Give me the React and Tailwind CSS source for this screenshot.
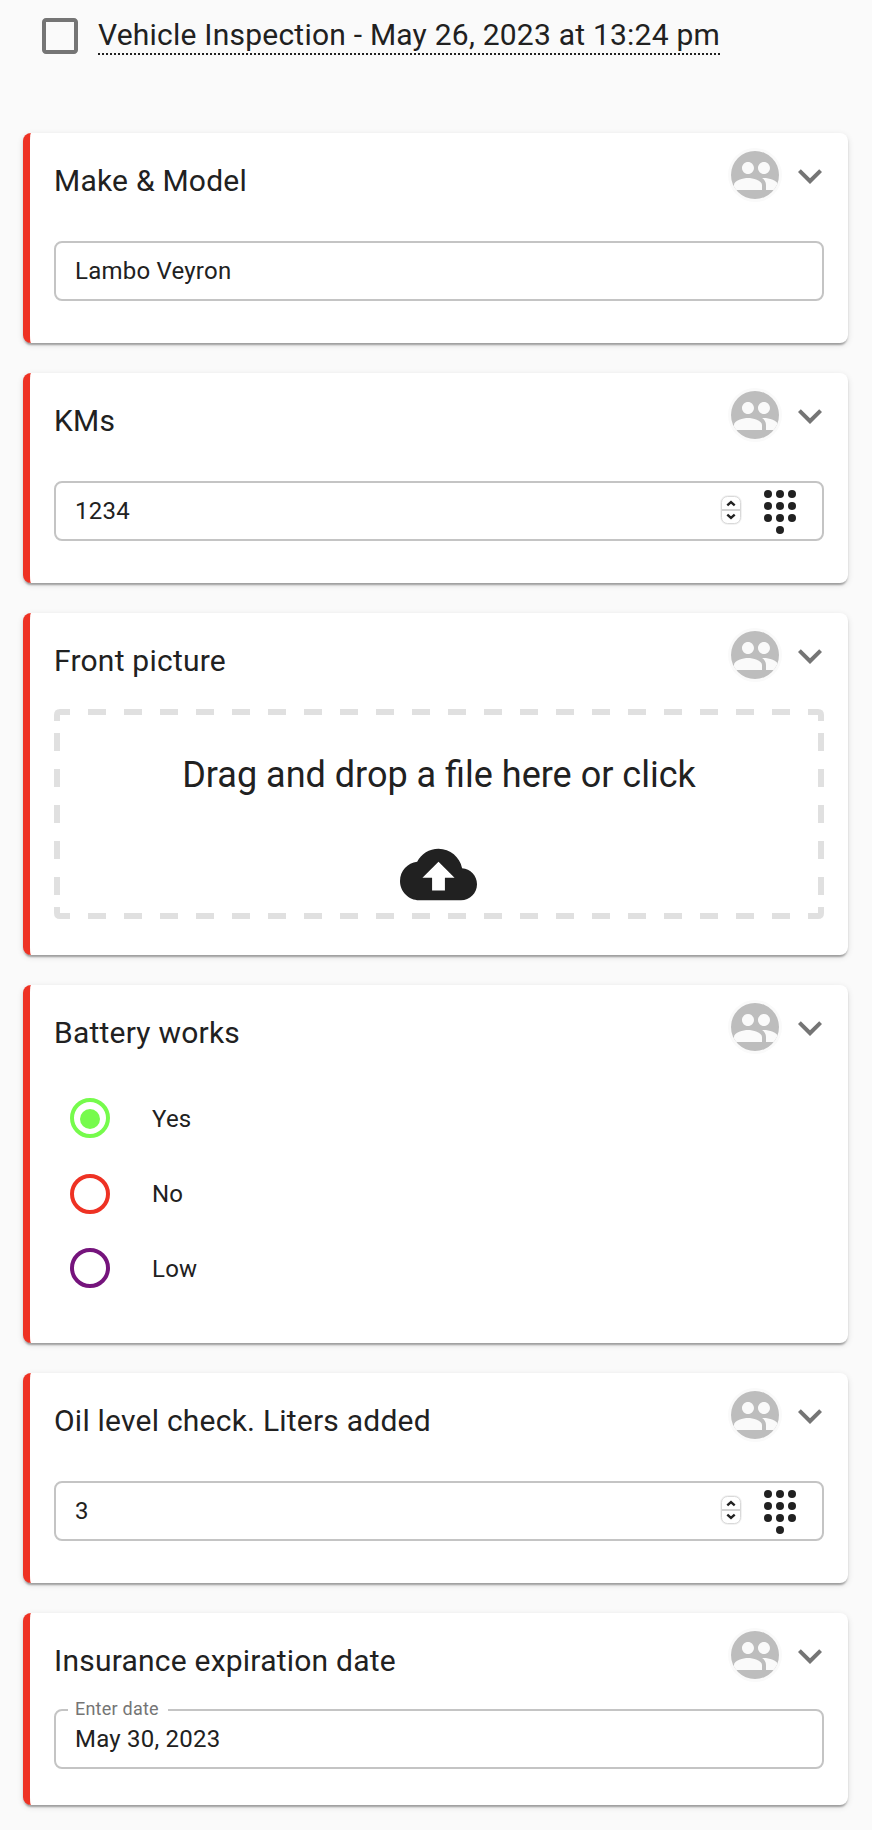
const RED = "#ee3224";

function Avatar() {
  return (
    <svg width="54" height="54" viewBox="0 0 54 54" className="block shrink-0">
      <defs>
        <clipPath id="disc">
          <circle cx="27" cy="27" r="24" />
        </clipPath>
      </defs>
      <circle cx="27" cy="27" r="27" fill="#fafafa" />
      <circle cx="27" cy="27" r="24" fill="#bdbdbd" />
      <g clipPath="url(#disc)">
        <path
          transform="translate(4 4) scale(2)"
          fill="#fafafa"
          d="M16 11c1.66 0 2.99-1.34 2.99-3S17.66 5 16 5c-1.66 0-3 1.34-3 3s1.34 3 3 3zm-8 0c1.66 0 2.99-1.34 2.99-3S9.66 5 8 5C6.34 5 5 6.34 5 8s1.34 3 3 3zm0 2c-2.33 0-7 1.17-7 3.5V19h14v-2.5c0-2.33-4.67-3.5-7-3.5zm8 0c-.29 0-.62.02-.97.05 1.16.84 1.97 1.97 1.97 3.45V19h6v-2.5c0-2.33-4.67-3.5-7-3.5z"
        />
      </g>
    </svg>
  );
}

function Chevron() {
  return (
    <svg width="48" height="48" viewBox="0 0 24 24" fill="#757575" className="block shrink-0">
      <path d="M16.59 8.59L12 13.17 7.41 8.59 6 10l6 6 6-6z" />
    </svg>
  );
}

function Dialpad() {
  const dots = [[6, 3], [12, 3], [18, 3], [6, 9], [12, 9], [18, 9], [6, 15], [12, 15], [18, 15], [12, 21]];
  return (
    <svg width="48" height="48" viewBox="0 0 24 24" fill="#212121" className="mt-[2px] block shrink-0">
      {dots.map(([x, y]) => (
        <circle key={x + "-" + y} cx={x} cy={y} r="2" />
      ))}
    </svg>
  );
}

function Spinner() {
  return (
    <svg width="24" height="32" viewBox="0 0 24 32" fill="none" className="-mt-[2px] block shrink-0">
      <rect x="2" y="2" width="20" height="28" rx="7" stroke="#000" strokeOpacity="0.05" strokeWidth="2" />
      <rect x="2.5" y="2.5" width="19" height="27" rx="6" fill="#fff" stroke="#d9d9d9" />
      <path d="M3 16H21" stroke="#d4d4d4" strokeWidth="2" />
      <path d="M8.3 11.3L12 8L15.7 11.3M8.3 20.7L12 24L15.7 20.7" stroke="#222" strokeWidth="2.4" />
    </svg>
  );
}

function Card({ title, className, children }) {
  return (
    <section
      className={
        "rounded-[8px] border-l-[7px] border-[#ee3224] bg-white pl-6 pr-6 shadow-[0_4px_2px_-2px_rgba(0,0,0,0.2),0_2px_2px_0_rgba(0,0,0,0.14),0_2px_6px_0_rgba(0,0,0,0.12)] " +
        className
      }
    >
      <header className="-mr-[10px] flex h-[96px] items-start">
        <h2 className="mt-[24px] flex-1 text-[30px] leading-[48px] tracking-[0.0075em]">{title}</h2>
        <div className="flex items-start pt-[15px]">
          <Avatar />
          <div className="ml-1 pt-1">
            <Chevron />
          </div>
        </div>
      </header>
      {children}
    </section>
  );
}

function Field({ value, numeric, label, className = "" }) {
  return (
    <div
      className={
        "relative flex h-[60px] items-center rounded-[8px] border-2 border-[#c4c4c4] pl-[19px] pr-[18px] text-[24px] tracking-[0.00938em] " +
        className
      }
    >
      {label && (
        <span className="absolute -top-[14px] left-[12px] bg-white pl-[7px] pr-[9px] text-[18px] leading-[24px] text-[#757575]">
          {label}
        </span>
      )}
      <span className="flex-1 leading-[28px]">{value}</span>
      {numeric && (
        <div className="flex items-center gap-[13px]">
          <Spinner />
          <Dialpad />
        </div>
      )}
    </div>
  );
}

function Option({ label, color, selected, ringOffset = "mt-[17px]" }) {
  return (
    <label className="flex h-[75px] items-center pl-4">
      <svg width="40" height="40" viewBox="0 0 40 40" fill="none" className={"block self-start " + ringOffset}>
        <circle cx="20" cy="20" r="18" stroke={color} strokeWidth="4" />
        {selected && <circle cx="20" cy="21" r="10" fill={color} />}
      </svg>
      <span className="ml-[42px] text-[24px] leading-[36px] tracking-[0.00938em]">{label}</span>
    </label>
  );
}

function DashedFrame() {
  return (
    <svg width="770" height="210" viewBox="0 0 770 210" fill="none" stroke="#e0e0e0" strokeWidth="6" className="absolute inset-0">
      <path d="M34 3H736M34 207H736M3 24V186M767 24V186" strokeDasharray="18 18" />
      <path d="M3 12V6Q3 3 6 3H16M754 3H764Q767 3 767 6V12M3 198V204Q3 207 6 207H16M754 207H764Q767 207 767 204V198" />
    </svg>
  );
}

export default function App() {
  return (
    <main className="min-h-[1830px] w-[872px] bg-[#fafafa] pl-[23px] pr-6 font-['Roboto',sans-serif] text-[#212121]">
      <header className="flex h-[133px] items-start pl-[13px]">
        <svg width="48" height="48" viewBox="0 0 24 24" fill="#757575" className="mt-3 block">
          <path d="M19 5v14H5V5h14m0-2H5c-1.1 0-2 .9-2 2v14c0 1.1.9 2 2 2h14c1.1 0 2-.9 2-2V5c0-1.1-.9-2-2-2z" />
        </svg>
        <h1 className="ml-[14px] mt-[17px] h-[38px] border-b-2 border-dotted border-[#212121] text-[30px] leading-[36px] tracking-[0.0075em]">
          Vehicle Inspection - May 26, 2023 at 13:24 pm
        </h1>
      </header>
      <div className="flex flex-col gap-[30px]">
        <Card title="Make & Model" className="h-[210px]">
          <Field value="Lambo Veyron" className="mt-3" />
        </Card>
        <Card title="KMs" className="h-[210px]">
          <Field value="1234" numeric className="mt-3" />
        </Card>
        <Card title="Front picture" className="h-[342px]">
          <div className="relative flex h-[210px] flex-col items-center pt-[42px]">
            <DashedFrame />
            <p className="text-[36px] leading-[48px]">Drag and drop a file here or click</p>
            <svg width="77" height="77" viewBox="0 0 24 24" fill="#212121" className="mr-[2px] mt-[37px] block">
              <path d="M19.35 10.04C18.67 6.59 15.64 4 12 4 9.11 4 6.6 5.64 5.35 8.04 2.34 8.36 0 10.91 0 14c0 3.31 2.69 6 6 6h13c2.76 0 5-2.24 5-5 0-2.64-2.05-4.78-4.65-4.96zM14 13v4h-4v-4H7l5-5 5 5h-3z" />
            </svg>
          </div>
        </Card>
        <Card title="Battery works" className="h-[358px]">
          <Option label="Yes" color="#76fb4c" selected />
          <Option label="No" color={RED} ringOffset="mt-[18px]" />
          <Option label="Low" color="#75147c" />
        </Card>
        <Card title="Oil level check. Liters added" className="h-[210px]">
          <Field value="3" numeric className="mt-3" />
        </Card>
        <Card title="Insurance expiration date" className="h-[192px]">
          <Field value="May 30, 2023" label="Enter date" />
        </Card>
      </div>
    </main>
  );
}
